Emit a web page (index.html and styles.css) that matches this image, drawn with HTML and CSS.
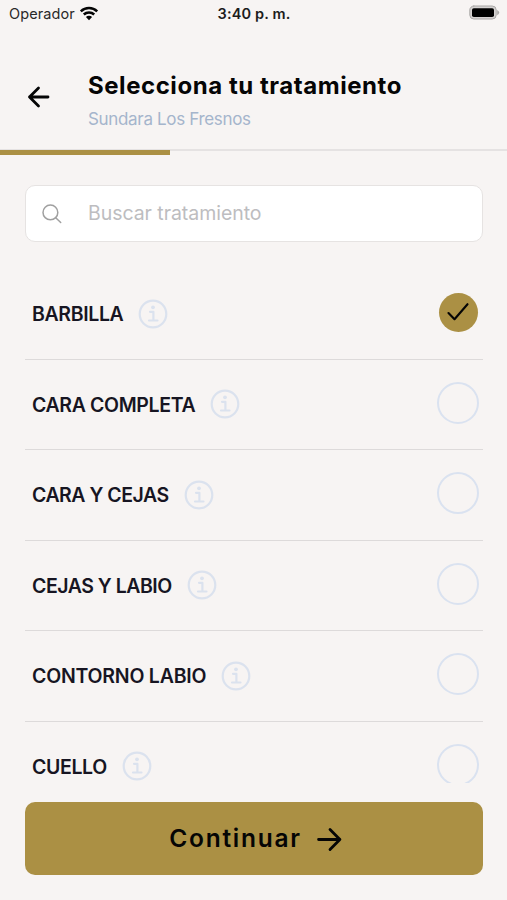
FILE: index.html
```html
<!DOCTYPE html>
<html lang="es">
<head>
<meta charset="utf-8">
<title>Selecciona tu tratamiento</title>
<link rel="stylesheet" href="styles.css">
</head>
<body>
<svg class="symbols" aria-hidden="true">
  <symbol id="info" viewBox="0 0 30 30"><circle cx="15" cy="15" r="13.3"/><path d="M12 12.8h3.4v8.4M11 21.5h8.5"/><circle class="dot" cx="15" cy="8.3" r="1.9"/></symbol>
</svg>
<div class="screen">
  <div class="status">
    <div class="carrier"><span>Operador</span>
      <svg class="wifi" viewBox="0 0 20 15"><path d="M1.8 5.3a11.8 11.8 0 0 1 16.4 0M4.8 8.5a7.5 7.5 0 0 1 10.4 0"/><path class="fill" d="M6.9 11a4.4 4.4 0 0 1 6.2 0L10 14.2z"/></svg>
    </div>
    <div class="time">3:40 p. m.</div>
    <svg class="battery" viewBox="0 0 32 16"><rect class="case" x=".8" y="1" width="26.4" height="13" rx="4"/><rect x="3" y="3.2" width="22" height="8.8" rx="1.8"/><path class="tip" d="M28.2 5v5.2q2-1 2-2.6t-2-2.6z"/></svg>
  </div>
  <header class="header">
    <svg class="back" viewBox="0 0 24 24"><path d="M21 12H2.5M11.5 3L2.5 12l9 9"/></svg>
    <div>
      <h1 class="title">Selecciona tu tratamiento</h1>
      <p class="subtitle">Sundara Los Fresnos</p>
    </div>
  </header>
  <div class="progress"><div class="progress-bar"></div></div>
  <div class="search">
    <svg class="lens" viewBox="0 0 20 20"><circle cx="8.4" cy="8.4" r="7.4"/><path d="M13.7 13.7l5 4.8"/></svg>
    <span class="placeholder">Buscar tratamiento</span>
  </div>
  <ul class="list">
    <li class="row"><span class="name">BARBILLA</span><svg class="info"><use href="#info"/></svg><span class="radio checked"><svg viewBox="0 0 22 18"><path d="M1.5 10l6 6.2L20.5 1.2"/></svg></span></li>
    <li class="row"><span class="name">CARA COMPLETA</span><svg class="info"><use href="#info"/></svg><span class="radio"></span></li>
    <li class="row"><span class="name tight">CARA Y CEJAS</span><svg class="info"><use href="#info"/></svg><span class="radio"></span></li>
    <li class="row"><span class="name tight">CEJAS Y LABIO</span><svg class="info"><use href="#info"/></svg><span class="radio"></span></li>
    <li class="row"><span class="name wide">CONTORNO LABIO</span><svg class="info"><use href="#info"/></svg><span class="radio"></span></li>
    <li class="row"><span class="name">CUELLO</span><svg class="info"><use href="#info"/></svg><span class="radio"></span></li>
  </ul>
  <div class="continue"><span>Continuar</span><svg class="next" viewBox="0 0 24 24"><path d="M1.5 12H22M12.5 2.5L22 12l-9.5 9.5"/></svg></div>
</div>
</body>
</html>
```

FILE: styles.css
```css
* { box-sizing: border-box; margin: 0; padding: 0; }
body { background: #f7f4f3; font-family: Inter, "Liberation Sans", sans-serif; color: #050505; }
svg { display: block; flex: none; fill: none; stroke: currentColor; stroke-linecap: round; stroke-linejoin: round; }
.symbols { display: none; }
.screen { width: 507px; height: 900px; overflow: hidden; display: flex; flex-direction: column; }
.status { height: 26px; display: grid; grid-template-columns: 1fr auto 1fr; align-items: center; padding: 0 6px 0 9px; font-size: 14.5px; }
.carrier { display: flex; align-items: center; gap: 4px; color: #292929; letter-spacing: 0.1px; }
.wifi { width: 20px; height: 15px; stroke: #050505; stroke-width: 2.5; stroke-linecap: butt; }
.wifi .fill { fill: #050505; stroke: none; }
.time { font-weight: 600; color: #1c1c1c; letter-spacing: 0.15px; margin-right: 2px; }
.battery { width: 32px; height: 16px; justify-self: end; fill: #000; stroke: none; }
.battery .case { fill: #d5d2d1; stroke: #aaa8a7; stroke-width: 1; }
.battery .tip { fill: #aaa8a7; }
.header { height: 123px; display: flex; padding: 44px 0 0 27px; }
.back { width: 24px; height: 24px; margin-top: 15px; margin-right: 37px; stroke-width: 2.8; }
.title { font-size: 24px; line-height: 32px; font-weight: 650; letter-spacing: 0.55px; white-space: nowrap; }
.subtitle { font-size: 17px; line-height: 24px; margin-top: 5px; color: #a5b5cc; letter-spacing: -0.33px; }
.progress { height: 6px; border-top: 2px solid #e5e2e2; }
.progress-bar { width: 170px; height: 5px; margin-top: -1px; background: #ab9044; }
.search { height: 57px; flex: none; margin: 30px 24px 0 25px; background: #fff; border: 1.5px solid #e6e3e2; border-radius: 10px; display: flex; align-items: center; padding-left: 17px; color: #a0a0a0; }
.lens { width: 20px; height: 20px; stroke-width: 1.5; margin-right: 25px; margin-left: -1px; }
.placeholder { font-size: 19.5px; line-height: 26px; color: #bdbdc0; letter-spacing: -0.05px; margin-bottom: 2px; margin-left: 1px; }
.list { list-style: none; height: 514px; flex: none; margin: 27px 24px 0 25px; overflow: hidden; }
.row { height: 90.5px; border-bottom: 1.5px solid #dddada; display: flex; align-items: center; padding: 0 4px 0 7px; }
.name { font-size: 19.5px; font-weight: 600; line-height: 26px; color: #171522; white-space: nowrap; letter-spacing: -0.36px; padding-top: 1px; }
.name.tight { letter-spacing: -0.48px; }
.name.wide { letter-spacing: -0.22px; }
.info { width: 30px; height: 30px; margin-left: 15px; color: #dbe2ee; stroke-width: 2.2; }
.dot { fill: #dbe2ee; stroke: none; }
.radio { width: 42px; height: 42px; margin-left: auto; margin-bottom: 3px; border: 2.5px solid #dae2f0; border-radius: 50%; }
.radio.checked { width: 39px; height: 39px; margin-right: 1.5px; border: 0; background: #ab9044; display: flex; align-items: center; justify-content: center; }
.radio svg { width: 22px; height: 18px; stroke-width: 2.1; }
.continue { height: 73px; flex: none; margin: 19px 24px 0 25px; background: #ab9044; border-radius: 10px; display: flex; align-items: center; justify-content: center; gap: 15px; font-size: 24.5px; font-weight: 600; letter-spacing: 1.75px; padding-left: 3px; }
.continue span { margin-bottom: 2px; }
.next { width: 25px; height: 25px; stroke-width: 2.7; margin-top: 2px; }
```
